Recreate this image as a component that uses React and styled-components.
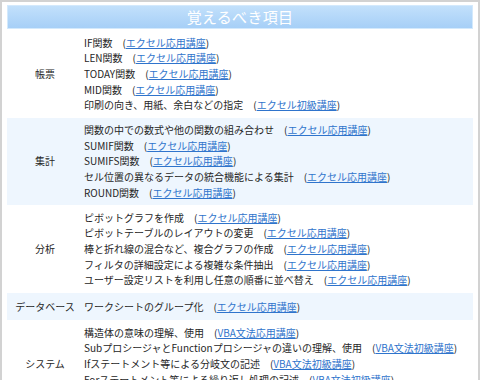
import React from "react";
import styled, { createGlobalStyle } from "styled-components";

const GlobalStyle = createGlobalStyle`
  html, body {
    margin: 0;
    padding: 0;
    background: #ffffff;
  }
  body {
    font-family: "Noto Sans CJK JP", "Noto Sans", sans-serif;
  }
`;

const sections = [
  {
    label: "帳票",
    items: [
      ["IF関数", "エクセル応用講座"],
      ["LEN関数", "エクセル応用講座"],
      ["TODAY関数", "エクセル応用講座"],
      ["MID関数", "エクセル応用講座"],
      ["印刷の向き、用紙、余白などの指定", "エクセル初級講座"],
    ],
  },
  {
    label: "集計",
    items: [
      ["関数の中での数式や他の関数の組み合わせ", "エクセル応用講座"],
      ["SUMIF関数", "エクセル応用講座"],
      ["SUMIFS関数", "エクセル応用講座"],
      ["セル位置の異なるデータの統合機能による集計", "エクセル応用講座"],
      ["ROUND関数", "エクセル応用講座"],
    ],
  },
  {
    label: "分析",
    items: [
      ["ピボットグラフを作成", "エクセル応用講座"],
      ["ピボットテーブルのレイアウトの変更", "エクセル応用講座"],
      ["棒と折れ線の混合など、複合グラフの作成", "エクセル応用講座"],
      ["フィルタの詳細設定による複雑な条件抽出", "エクセル応用講座"],
      ["ユーザー設定リストを利用し任意の順番に並べ替え", "エクセル応用講座"],
    ],
  },
  {
    label: "データベース",
    items: [["ワークシートのグループ化", "エクセル応用講座"]],
  },
  {
    label: "システム",
    items: [
      ["構造体の意味の理解、使用", "VBA文法応用講座"],
      ["SubプロシージャとFunctionプロシージャの違いの理解、使用", "VBA文法初級講座"],
      ["Ifステートメント等による分岐文の記述", "VBA文法初級講座"],
      ["Forステートメント等による繰り返し処理の記述", "VBA文法初級講座"],
      ["エラー処理の記述", "VBA文法応用講座"],
    ],
  },
];

const App = () => {
  return (
    <>
      <GlobalStyle />
      <Frame>
        <Title>覚えるべき項目</Title>
        <Table>
          <tbody>
            {sections.map((section, i) => {
              const single = section.items.length === 1;
              return (
                <Row key={section.label} $shaded={i % 2 === 1}>
                  <Label $single={single}>{section.label}</Label>
                  <Content $single={single}>
                    {section.items.map(([text, course]) => (
                      <Line key={text}>
                        {text}
                        {"　("}
                        <CourseLink href="#">{course}</CourseLink>)
                      </Line>
                    ))}
                  </Content>
                </Row>
              );
            })}
          </tbody>
        </Table>
      </Frame>
    </>
  );
};

const Frame = styled.div`
  box-sizing: border-box;
  width: 480px;
  min-height: 400px;
  border: 2px solid #d2d2d2;
  padding: 3px 5px;
  background: #ffffff;
`;

const Title = styled.div`
  box-sizing: border-box;
  height: 24px;
  border: 1px solid #d3e9fc;
  background: linear-gradient(#c2e0fb, #a6cff7);
  color: #ffffff;
  font-size: 15px;
  line-height: 22px;
  text-align: center;
  letter-spacing: 0.3px;
`;

const Table = styled.table`
  width: 100%;
  border-collapse: separate;
  border-spacing: 0 1.5px;
  margin-top: 0.5px;
  font-size: 10px;
  line-height: 15.7px;
  color: #262626;
`;

const Row = styled.tr`
  background: ${(p) => (p.$shaded ? "#eef6fe" : "#ffffff")};
`;

const Label = styled.td`
  width: 74px;
  padding: ${(p) => (p.$single ? "6px 0 5px 1px" : "4px 0 4px 1px")};
  text-align: center;
  vertical-align: middle;
  white-space: nowrap;
`;

const Content = styled.td`
  padding: ${(p) => (p.$single ? "6px 4px 5px 2px" : "4px 4px 4px 2px")};
  vertical-align: middle;
`;

const Line = styled.div`
  white-space: nowrap;
`;

const CourseLink = styled.a`
  color: #2f74cc;
  text-decoration: underline;
`;

export default App;
